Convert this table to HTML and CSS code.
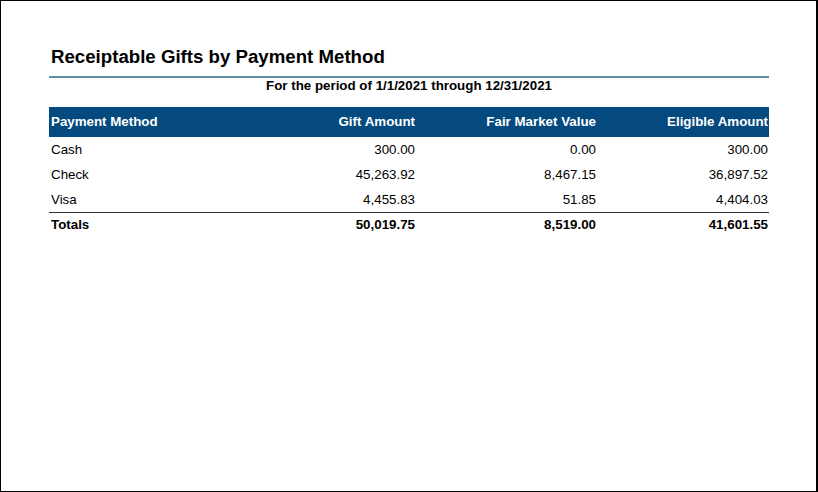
FILE: index.html
```html
<!DOCTYPE html>
<html>
<head>
<meta charset="utf-8">
<link rel="stylesheet" href="styles.css">
</head>
<body>
<div class="frame">
  <div class="report">
    <h1 class="title">Receiptable Gifts by Payment Method</h1>
    <div class="period">For the period of 1/1/2021 through 12/31/2021</div>
    <table class="gifts">
      <colgroup>
        <col class="c1"><col class="c2"><col class="c3"><col class="c4">
      </colgroup>
      <thead>
        <tr>
          <th class="left">Payment Method</th>
          <th>Gift Amount</th>
          <th>Fair Market Value</th>
          <th>Eligible Amount</th>
        </tr>
      </thead>
      <tbody>
        <tr><td class="left">Cash</td><td>300.00</td><td>0.00</td><td>300.00</td></tr>
        <tr><td class="left">Check</td><td>45,263.92</td><td>8,467.15</td><td>36,897.52</td></tr>
        <tr class="last"><td class="left">Visa</td><td>4,455.83</td><td>51.85</td><td>4,404.03</td></tr>
        <tr class="totals"><td class="left">Totals</td><td>50,019.75</td><td>8,519.00</td><td>41,601.55</td></tr>
      </tbody>
    </table>
  </div>
</div>
</body>
</html>
```
FILE: styles.css
```css
html, body {
  margin: 0;
  padding: 0;
  background: #fff;
}
.frame {
  box-sizing: border-box;
  width: 818px;
  height: 492px;
  border: 1px solid #000;
  border-right-width: 2px;
  font-family: "Liberation Sans", Arial, sans-serif;
  color: #000;
}
.report {
  width: 720px;
  margin-left: 48px;
  padding-top: 45px;
}
.title {
  margin: 0;
  padding: 0 0 8px 2px;
  font-size: 18.67px;
  line-height: 22px;
  font-weight: bold;
  border-bottom: 2px solid #5e8fa6;
}
.period {
  margin-top: 0;
  text-align: center;
  font-size: 13.33px;
  font-weight: bold;
  line-height: 16px;
}
.gifts {
  margin-top: 13px;
  width: 720px;
  border-collapse: collapse;
  table-layout: fixed;
  font-size: 13.33px;
}
.c1 { width: 187px; }
.c2 { width: 180px; }
.c3 { width: 181px; }
.c4 { width: 172px; }
.gifts th, .gifts td {
  padding: 0 1px 0 2px;
  text-align: right;
  white-space: nowrap;
}
.gifts th {
  background: #044a7e;
  color: #fff;
  font-weight: bold;
  height: 30px;
  line-height: 28px;
}
.gifts td {
  padding-top: 1px;
  height: 24px;
  line-height: 24px;
  vertical-align: top;
}
.gifts .left {
  text-align: left;
}
.gifts tr.last td {
  border-bottom: 1px solid #333;
}
.gifts tr.totals td {
  font-weight: bold;
  height: 23px;
  line-height: 21px;
}
```
